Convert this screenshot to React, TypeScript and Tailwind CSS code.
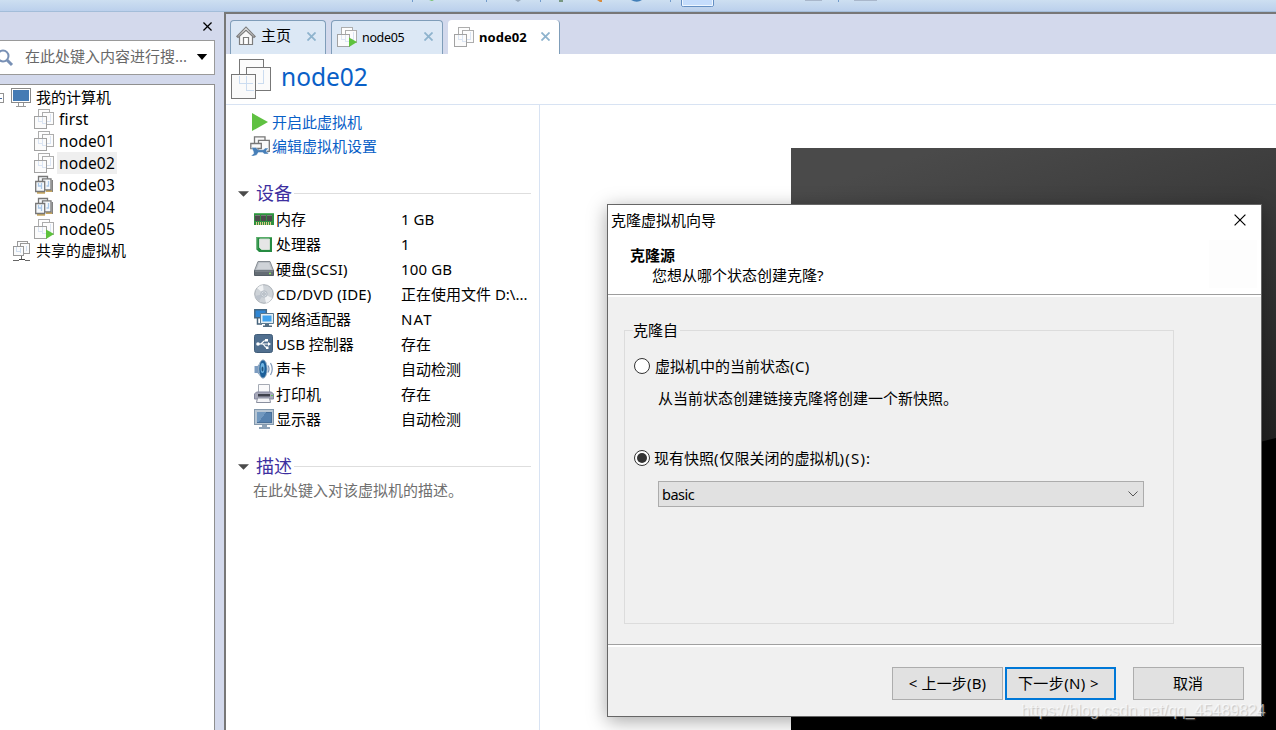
import React from 'react';

type IconProps = { className?: string };

function VmIcon({ className = 'h-5 w-5', running = false }: IconProps & { running?: boolean }) {
  return (
    <svg viewBox="0 0 20 20" className={className} fill="none" shapeRendering="crispEdges">
      <path d="M4.500 .5h11v11h-11z" fill="#fdfdfd" stroke="#adadad" />
      <path d="M8.500 3.500h11v12h-11z" fill="#fcfcfc" stroke="#adadad" />
      <path d="M.5 7.500h12v12H.5z" fill="#fbfbfb" stroke="#a2a2a2" />
      <path d="M4.500 8v4H8M8.500 8v6H12M16.500 5v7H13" stroke="#dbe5f3" />
      {running && <path d="M12 10.500l8 4.500-8 5z" fill="#5ec23d" shapeRendering="auto" />}
    </svg>
  );
}

function BigVmIcon() {
  return (
    <svg viewBox="0 0 40 40" className="h-10 w-10" fill="none" shapeRendering="crispEdges">
      <path d="M8.500 .5h24v24h-24z" fill="#fcfcfc" stroke="#777" />
      <path d="M15.500 8.500h24v23h-24z" fill="#fbfbfb" stroke="#777" />
      <path d="M.5 15.500h24v24H.5z" fill="#fafafa" stroke="#777" />
      <path d="M8.500 17v7h13M15.500 17v14h7M32.500 11v13H27" stroke="#cbdcf0" />
    </svg>
  );
}

function SuspendedIcon() {
  return (
    <svg viewBox="0 0 20 20" className="h-5 w-5" fill="none" strokeWidth="1.300">
      <path d="M18.300 5v12" stroke="#7c7c7c" />
      <path d="M3 17.800h8M12 16h6" stroke="#c9a860" strokeWidth="1.800" />
      <path d="M4.500 1.500h9v9h-9z" fill="#f5f8fb" stroke="#777" />
      <path d="M8.500 3.800h8.500v11H8.500z" fill="#f5f8fb" stroke="#777" />
      <path d="M1.700 6.500h9v10h-9z" fill="#f5f8fb" stroke="#777" />
      <path d="M4.500 8v3h3M7.500 8v6M14.500 6v5h-2" stroke="#aac8e8" />
    </svg>
  );
}

function SharedIcon() {
  return (
    <svg viewBox="0 0 20 20" className="h-5 w-5" fill="none" shapeRendering="crispEdges">
      <path d="M5.500 .5h10v9h-10z" fill="#fafbfc" stroke="#999" />
      <path d="M8.500 2.500h9v10h-9z" fill="#fafbfc" stroke="#999" />
      <path d="M1.500 5.500h10v9h-10z" fill="#fafbfc" stroke="#999" />
      <path d="M4.500 6v4H8M8.500 7v5M14.500 5v5" stroke="#cfddee" />
      <path d="M9.500 15v3M1 19.500h6m6 0h5" stroke="#666" />
      <path d="M7 18.500h6" stroke="#444" />
    </svg>
  );
}

function ComputerIcon() {
  return (
    <svg viewBox="0 0 20 20" className="h-5 w-5" fill="none" shapeRendering="crispEdges">
      <path d="M.5 .5h19v14H.5z" fill="#fff" stroke="#8a8a8a" />
      <path d="M2 2h16v11H2z" fill="#457bb4" />
      <path d="M7.500 15v3m5-3v3M5 18.500h10" stroke="#999" />
    </svg>
  );
}

function HomeIcon() {
  return (
    <svg viewBox="0 0 20 20" className="h-5 w-5" fill="none" stroke="#7d7d7d" strokeWidth="1.200">
      <path d="M3.500 10v8.500h13V10L10 4z" fill="#f9f9f9" />
      <path d="M.8 10.500 10 1.200l9.200 9.300-1.200 1L10 4l-8 7.500z" fill="#fff" />
      <path d="M7.500 18.500v-7h5v7z" fill="#fff" />
    </svg>
  );
}

function Cross({ className = 'h-[10px] w-[10px]', width = 2 }: IconProps & { width?: number }) {
  return (
    <svg viewBox="0 0 10 10" className={className} stroke="currentColor" strokeWidth={width}>
      <path d="M.5 .5l9 9M9.500 .5l-9 9" />
    </svg>
  );
}

function DeviceIcon({ kind }: { kind: string }) {
  return (
    <svg viewBox="0 0 20 20" className="h-5 w-5 shrink-0" fill="none">
      {kind === 'memory' && (
        <g shapeRendering="crispEdges">
          <path d="M0 4h20v12H0z" fill="#2f9140" />
          <path d="M0 4h20v1H0z" fill="#56b364" />
          <path d="M1 6h5v6H1zM7 6h5v6H7zM13 6h5v6h-5z" fill="#4c4c4c" />
          <path d="M2.500 13v3m2-3v3m2-3v3m2-3v3m2-3v3m2-3v3m2-3v3m2-3v3" stroke="#e0c98a" />
          <path d="M1 6h5M7 6h5M13 6h5" stroke="#777" />
        </g>
      )}
      {kind === 'cpu' && (
        <g>
          <path d="M2.500 3H18v15H5l-2.500-2.500z" fill="#268b42" />
          <path d="M5.500 5h10v10.500h-8l-2-2z" fill="#e6e6e6" stroke="#d0dfd2" />
          <path d="M2.500 3.500H18M3 3v12" stroke="#58ad67" />
        </g>
      )}
      {kind === 'disk' && (
        <g>
          <path d="M4 2.500h12l3.500 9H.5z" fill="#bbc0c6" stroke="#868c93" />
          <path d="M5 4h10l2 6H3z" fill="#cfd3d8" />
          <path d="M.5 11.500h19v5H.5z" fill="#646c74" stroke="#555e66" />
          <path d="M1 12h18" stroke="#8f969c" />
          <path d="M15 14.500h2" stroke="#8de35e" strokeWidth="1.500" />
        </g>
      )}
      {kind === 'cd' && (
        <g>
          <circle cx="10" cy="10" r="9.300" fill="#ced3d8" stroke="#a9afb5" />
          <path d="M10 10 3 4a9 9 0 0 1 6-3zM10 10l8 4a9 9 0 0 1-6 5z" fill="#f0f2f4" />
          <path d="M10 10 1 12a9 9 0 0 0 4 5z" fill="#bcc3cc" />
          <circle cx="10" cy="10" r="3.200" fill="#d9dee3" stroke="#b3bbc4" />
          <circle cx="10" cy="10" r="1.200" fill="#fff" stroke="#9ba5b0" />
        </g>
      )}
      {kind === 'net' && (
        <g>
          <path d="M.8 .8h11.500v8H.8z" fill="#2f86d4" stroke="#456884" strokeWidth="1.500" />
          <path d="M3.500 9v6H8" stroke="#46637c" strokeWidth="1.500" />
          <path d="M6.500 4.500h13v10h-13z" fill="#e3edf3" stroke="#5b7b93" />
          <path d="M8.500 6.500h9v6h-9z" fill="#3fa2ee" />
          <path d="M11 15h4v1.500h3V18H9v-1.500h2z" fill="#526c81" />
        </g>
      )}
      {kind === 'usb' && (
        <g>
          <rect x=".5" y=".5" width="18" height="18" rx="2" fill="#506f8f" stroke="#415d79" />
          <path d="M3 10h12M6 10c3 0 2-3.500 6-3.500M8 10c3 0 2 3.500 5 3.500" stroke="#fff" strokeWidth="1.200" />
          <circle cx="4" cy="10" r="1.800" fill="#fff" />
          <path d="M14 8l3 2-3 2zM11 5h3v2.500h-3zM12 12.500h2.500V15H12z" fill="#fff" />
        </g>
      )}
      {kind === 'sound' && (
        <g>
          <path d="M.5 7h3L8 1h3v18H8l-4.500-5h-3z" fill="#7c9cc0" />
          <ellipse cx="9" cy="10" rx="4.200" ry="9.200" fill="#1c5f99" stroke="#a7b9ca" />
          <ellipse cx="8.500" cy="9" rx="2" ry="5" fill="#71b5e2" />
          <ellipse cx="8.500" cy="10" rx="1" ry="2.500" fill="#22557f" />
          <path d="M14 6.500q2 3.500 0 7M16.500 4q3.500 6 0 12" stroke="#8198b8" strokeWidth="1.200" />
        </g>
      )}
      {kind === 'printer' && (
        <g>
          <path d="M4.500 .5h11v8h-11z" fill="#fafafb" stroke="#a5aab4" />
          <path d="M2.500 8h15l2 2v5H.5v-5z" fill="#a6a8b9" stroke="#8588a0" />
          <path d="M4 10h12v2.500H4z" fill="#3e414c" />
          <path d="M3.500 14h12l1 4.500h-14z" fill="#f5f5f8" stroke="#8a8f9e" />
          <path d="M17 11.500h2" stroke="#66cc55" />
        </g>
      )}
      {kind === 'display' && (
        <g shapeRendering="crispEdges">
          <path d="M.5 .5h19v15H.5z" fill="#b7c6d4" stroke="#8398ac" />
          <path d="M3 3h14v10H3z" fill="#5681ae" stroke="#486f99" />
          <path d="M3 3h9l-7 10H3z" fill="#7198bf" />
          <path d="M8 16h5v2h3v2H5v-2h3z" fill="#8ea3b8" />
        </g>
      )}
    </svg>
  );
}

function Toolbar() {
  return (
    <div className="h-3 w-full shrink-0 overflow-hidden border-b border-[#a3bdd9] bg-gradient-to-b from-[#cddff1] to-[#bbd0ec]">
      <svg viewBox="0 0 1276 12" className="h-3 w-[1276px]" fill="none">
        <path d="M412.500 0v2M486.500 0v2M540.500 0v2M670.500 0v2M838.500 0v2" stroke="#729bcb" />
        <path d="M429 0h5l-2 1z" fill="#72bf65" />
        <path d="M515 0h6l-3 2z" fill="#98a9bb" />
        <path d="M559 0h4v2h-4z" fill="#779781" />
        <path d="M597 0h5v2h-2z" fill="#d88c3f" />
        <path d="M631 0h11q-5 3.500-11 0z" fill="#427fb8" />
        <path d="M681.500 0v5q0 1.500 2 1.500h28q2 0 2-1.500V0" fill="#c5ddfc" stroke="#648fc3" />
        <path d="M682.500 0v5.500h30V0" stroke="#eff7ff" />
        <path d="M805 .5h17M854 .5h23" stroke="#a9b7cb" />
      </svg>
    </div>
  );
}

const vms = [
  { name: 'first', state: 'off' },
  { name: 'node01', state: 'off' },
  { name: 'node02', state: 'off' },
  { name: 'node03', state: 'suspended' },
  { name: 'node04', state: 'suspended' },
  { name: 'node05', state: 'running' },
];

function Sidebar() {
  return (
    <aside className="flex w-[224px] shrink-0 flex-col bg-[#d3d9ec]">
      <div className="flex h-7 items-center justify-end pr-3">
        <Cross className="mt-px h-[9px] w-[9px] text-black" width={1.4} />
      </div>
      <div className="flex h-[35px] w-[215px] items-center border-y border-r border-[#9a9a9a] bg-white">
        <svg viewBox="0 0 14 18" className="h-[18px] w-[14px] shrink-0" fill="none" stroke="#7890b5">
          <circle cx="3" cy="7" r="5.500" strokeWidth="2" />
          <path d="M7 11l5 5" strokeWidth="3" />
        </svg>
        <span className="-mt-0.5 ml-[11px] whitespace-nowrap text-[15px] text-[#686868]">在此处键入内容进行搜...</span>
        <svg viewBox="0 0 12 7" className="-mt-0.5 ml-auto mr-[6px] h-[6px] w-3 shrink-0"><path d="M0 0h12L6 7z" fill="#000" /></svg>
      </div>
      <div className="mt-[9px] flex w-[215px] grow flex-col border-r border-t border-[#8f8f8f] bg-white pt-px text-[15px]">
        <div className="flex h-[22px] items-center">
          <svg viewBox="0 0 4 10" className="mt-0.5 h-[10px] w-1" fill="none" shapeRendering="crispEdges">
            <path d="M-6 .5h9.500v9H-6" fill="#fff" stroke="#929292" /><path d="M0 5h2" stroke="#4468a0" />
          </svg>
          <span className="ml-[7px] mt-0.5"><ComputerIcon /></span>
          <span className="ml-[5px]">我的计算机</span>
        </div>
        {vms.map((vm) => (
          <div key={vm.name} className="flex h-[22px] items-center pl-[34px]">
            {vm.state === 'suspended' ? <SuspendedIcon /> : <VmIcon running={vm.state === 'running'} />}
            <span className={vm.name === 'node02' ? 'ml-[3px] h-[22px] bg-[#efefef] px-[2px] text-[15.500px] leading-[22px] tracking-[0.16px]' : 'ml-[3px] h-[22px] px-[2px] text-[15.500px] leading-[22px] tracking-[0.16px]'}>{vm.name}</span>
          </div>
        ))}
        <div className="flex h-[22px] items-center pl-3">
          <SharedIcon />
          <span className="-mt-0.5 ml-1">共享的虚拟机</span>
        </div>
      </div>
    </aside>
  );
}

function Tabs() {
  return (
    <div className="flex h-10 shrink-0 items-end bg-[#d3d9ec] pl-1">
      <div className="flex h-[34px] w-24 items-center rounded-t-[4px] border border-b-0 border-[#7f9db9] bg-[#dce8f5] pl-[5px]">
        <span className="-mt-1"><HomeIcon /></span>
        <span className="-mt-1 ml-[5px] text-[15px]">主页</span>
        <span className="-mt-0.5 ml-auto mr-[9px] text-[#8eb3cd]"><Cross className="h-[9px] w-[9px]" /></span>
      </div>
      <div className="ml-[5px] flex h-[34px] w-28 items-center rounded-t-[4px] border border-b-0 border-[#7f9db9] bg-[#dce8f5] pl-[5px]">
        <span className="-mt-0.5"><VmIcon running /></span>
        <span className="mt-0.5 ml-[5px] text-[12.500px] tracking-[-0.35px]">node05</span>
        <span className="-mt-0.5 ml-auto mr-[9px] text-[#8eb3cd]"><Cross className="h-[9px] w-[9px]" /></span>
      </div>
      <div className="ml-[5px] flex h-[34px] w-28 items-center rounded-t-[4px] border-r border-[#7f9db9] bg-white pl-[6px]">
        <span className="-mt-px"><VmIcon /></span>
        <span className="mt-px ml-[5px] text-[13px] font-bold tracking-[0.05px]">node02</span>
        <span className="-mt-px ml-auto mr-[9px] text-[#8eb3cd]"><Cross className="h-[9px] w-[9px]" /></span>
      </div>
    </div>
  );
}

const devices = [
  { kind: 'memory', name: '内存', value: '1 GB' },
  { kind: 'cpu', name: '处理器', value: '1' },
  { kind: 'disk', name: '硬盘(SCSI)', value: '100 GB' },
  { kind: 'cd', name: 'CD/DVD (IDE)', value: '正在使用文件 D:\\...' },
  { kind: 'net', name: '网络适配器', value: 'NAT' },
  { kind: 'usb', name: 'USB 控制器', value: '存在' },
  { kind: 'sound', name: '声卡', value: '自动检测' },
  { kind: 'printer', name: '打印机', value: '存在' },
  { kind: 'display', name: '显示器', value: '自动检测' },
];

function SectionTitle({ title }: { title: string }) {
  return (
    <div className="flex h-[26px] items-center pl-3 pr-2 text-[18px] text-[#3d2f9f]">
      <svg viewBox="0 0 12 6" className="mt-0.5 h-[6px] w-[11px]"><path d="M0 0h12L6 6z" fill="#4b4b4b" /></svg>
      <span className="ml-[7px] leading-[26px]">{title}</span>
      <span className="ml-[2px] h-px grow bg-[#dedede]" />
    </div>
  );
}

function Details() {
  return (
    <section className="flex w-[314px] shrink-0 flex-col border-r border-[#d8e3f3] pt-[5px]">
      <div className="flex h-6 items-center pl-[26px] text-[15px] text-[#0960c7]">
        <svg viewBox="0 0 16 18" className="h-[18px] w-4"><path d="M0 0l16 9-16 9z" fill="#5fc141" /></svg>
        <span className="ml-[4px]">开启此虚拟机</span>
      </div>
      <div className="flex h-6 items-center pl-6 text-[15px] text-[#0960c7]">
        <svg viewBox="0 0 20 20" className="h-5 w-5" fill="none">
          <path d="M4.500 .8h10.500v9H4.500z" fill="#fafafa" stroke="#777" strokeWidth="1.300" />
          <path d="M8.500 4.300h10.800v11H8.500z" fill="#fafafa" stroke="#777" strokeWidth="1.300" />
          <path d="M.8 7.500h10.500v5H.8z" fill="#fafafa" stroke="#777" strokeWidth="1.300" />
          <path d="M1.500 11.500h4.200l2.600 2.200h5l2.200-1.700 3.500.3-2.500 1.700v2l2.500.8-1.500 1.200h-3l-1.800-1.500H8.300l-1.500 2.500-3 1H1l2.800-2.500-.5-2.300z" fill="#477fb8" stroke="#fff" strokeWidth=".4" />
        </svg>
        <span className="ml-[2px]">编辑虚拟机设置</span>
      </div>
      <div className="mt-[22px]"><SectionTitle title="设备" /></div>
      <div className="mt-px">
        {devices.map((device) => (
          <div key={device.kind} className="flex h-[25px] items-center pl-7 text-[15px] whitespace-pre">
            <span className="-mt-0.5"><DeviceIcon kind={device.kind} /></span>
            <span className={device.kind === 'cd' ? 'ml-[2px] w-[125px] tracking-[0.1px]' : device.kind === 'disk' ? 'ml-[2px] w-[125px] tracking-[0.2px]' : 'ml-[2px] w-[125px]'}>{device.name}</span>
            <span className={device.kind === 'net' ? 'tracking-[1.200px]' : device.kind === 'disk' ? 'tracking-[0.15px]' : ''}>{device.value}</span>
          </div>
        ))}
      </div>
      <div className="mt-[21px]"><SectionTitle title="描述" /></div>
      <div className="pl-[27px] text-[15px] leading-[23px] text-[#707070]">在此处键入对该虚拟机的描述。</div>
    </section>
  );
}

function CloneDialog() {
  return (
    <div className="absolute left-[607px] top-[204px] flex h-[513px] w-[655px] flex-col border border-[#666] bg-[#f0f0f0] text-[15px] shadow-[0_4px_18px_rgba(0,0,0,0.35)]">
      <div className="flex h-[90px] shrink-0 flex-col border-b border-[#9d9d9d] bg-white">
        <div className="flex h-[30px] items-center justify-between pl-[3px] pr-[15px]">
          <span>克隆虚拟机向导</span>
          <Cross className="h-3 w-3" width={1} />
        </div>
        <div className="flex justify-between pr-1">
          <div className="pt-[10px]">
            <div className="pl-[22px] font-bold leading-5">克隆源</div>
            <div className="pl-[44px] leading-5">您想从哪个状态创建克隆?</div>
          </div>
          <div className="mt-[5px] h-12 w-12 bg-[#fdfdfd]" />
        </div>
      </div>
      <div className="h-[2px] shrink-0 bg-white" />
      <fieldset className="ml-4 mt-[22px] h-[305px] w-[550px] shrink-0 border border-[#dcdcdc] pl-[8px]">
        <legend className="h-[22px] pr-[2px] leading-[22px]">克隆自</legend>
        <label className="mt-[14px] flex h-[22px] items-center pl-px">
          <span className="h-4 w-4 rounded-full border border-[#333] bg-white" />
          <span className="ml-[5px]">虚拟机中的当前状态<span className="tracking-[0.4px]">(C)</span></span>
        </label>
        <p className="mt-[10px] pl-[25px] leading-[22px]">从当前状态创建链接克隆将创建一个新快照。</p>
        <label className="mt-[38px] flex h-[22px] items-center pl-px">
          <span className="flex h-4 w-4 items-center justify-center rounded-full border border-[#333] bg-white">
            <span className="h-[10px] w-[10px] rounded-full bg-[#333]" />
          </span>
          <span className="ml-[4px]">现有快照<span className="tracking-[1px]">(</span>仅限关闭的虚拟机<span className="tracking-[1.200px]">)(S):</span></span>
        </label>
        <div className="ml-[25px] mt-[12px] flex h-[26px] w-[486px] items-center justify-between border border-[#acacac] bg-[#e1e1e1] pl-[3px] pr-[5px]">
          <span className="mt-px text-[14.500px] tracking-[-0.5px]">basic</span>
          <svg viewBox="0 0 10 6" className="h-[6px] w-[10px]" fill="none" stroke="#555"><path d="M.5 .5 5 5 9.500 .5" /></svg>
        </div>
      </fieldset>
      <div className="mt-[20px] flex grow items-start justify-end border-t border-[#a0a0a0] pr-[17px] pt-[22px] shadow-[inset_0_2px_0_#fff]">
        <button className="h-[33px] w-[111px] border border-[#adadad] bg-[#e1e1e1] text-[15px] tracking-[0.15px]">&lt; 上一步(B)</button>
        <button className="ml-[2px] h-[33px] w-[111px] whitespace-nowrap border-2 border-[#0078d7] bg-[#e1e1e1] pr-1 text-[15px] tracking-[0.4px]">下一步(N) &gt;</button>
        <button className="ml-[17px] h-[33px] w-[111px] border border-[#adadad] bg-[#e1e1e1] pr-px">取消</button>
      </div>
    </div>
  );
}

export default function App() {
  return (
    <div className="relative flex h-[730px] w-[1276px] flex-col overflow-hidden bg-[#d3d9ec] font-['Noto_Sans','Noto_Sans_CJK_SC',sans-serif] text-black">
      <Toolbar />
      <div className="flex min-h-0 grow">
        <Sidebar />
        <main className="flex min-w-0 grow flex-col border-l-2 border-t-2 border-[#777] bg-white">
          <Tabs />
          <header className="flex h-[51px] shrink-0 items-center border-b border-[#d8e3f3] pl-[5px]">
            <BigVmIcon />
            <h1 className="-mt-1 ml-[10px] text-[24.500px] text-[#0960c7]">node02</h1>
          </header>
          <div className="flex min-h-0 grow">
            <Details />
            <div className="grow pl-[251px] pt-[43px]">
              <svg viewBox="0 0 485 582" className="h-[582px] w-[485px]">
                <defs>
                  <linearGradient id="screen" x1="150" y1="0" x2="280" y2="400" gradientUnits="userSpaceOnUse">
                    <stop stopColor="#4a4a4a" /><stop offset="1" stopColor="#1e1e1e" />
                  </linearGradient>
                </defs>
                <path d="M0 0h485v582H0z" fill="url(#screen)" />
                <path d="M0 440Q250 345 485 290v292H0z" fill="#000" />
              </svg>
            </div>
          </div>
        </main>
      </div>
      <CloneDialog />
      <div className="absolute left-[1021px] top-[701px] whitespace-nowrap font-['Liberation_Sans',sans-serif] text-[16px] leading-5 tracking-[-0.03px] text-white/60 [text-shadow:1px_1px_1px_rgba(100,100,100,0.3)]">https://blog.csdn.net/qq_45489824</div>
    </div>
  );
}
